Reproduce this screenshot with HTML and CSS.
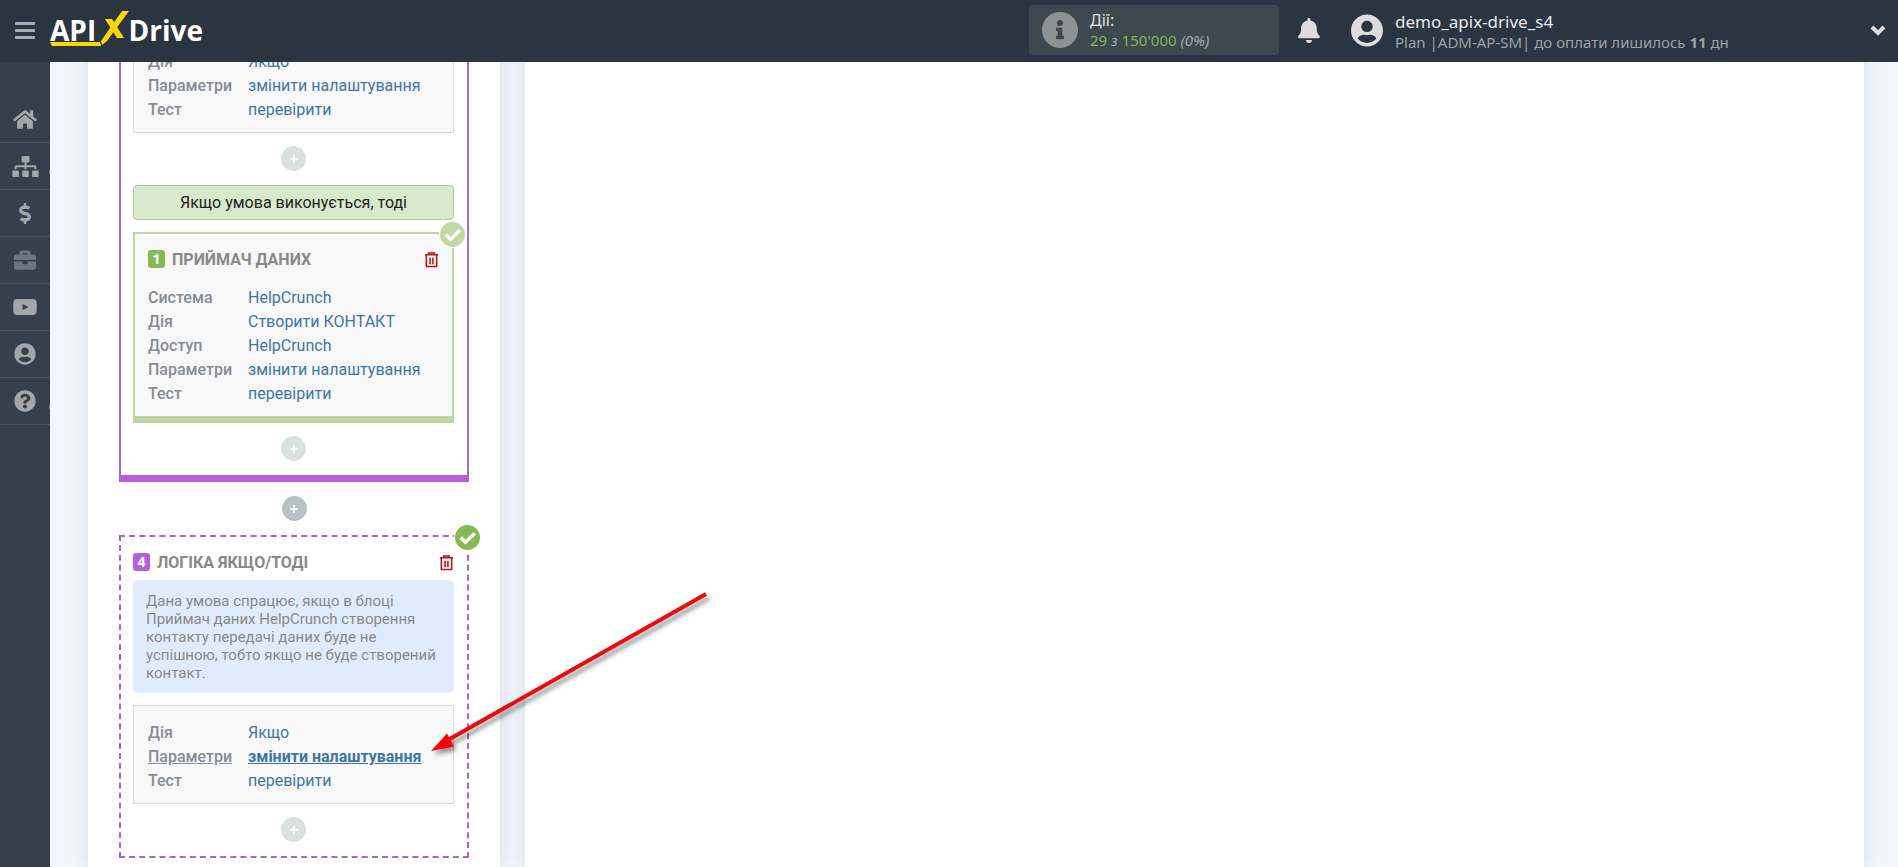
FILE: index.html
```
<!DOCTYPE html>
<html lang="uk">
<head>
    <meta charset="UTF-8">
    <meta name="viewport" content="width=device-width, initial-scale=1.0">
    <title>ApiX-Drive</title>
    <link rel="stylesheet" href="styles.css">
</head>
<body>
    <!-- Shared icons -->
    <svg class="sprite" aria-hidden="true">
        <symbol id="icon-user" viewBox="0 0 496 512">
            <path d="M248 8C111 8 0 119 0 256s111 248 248 248 248-111 248-248S385 8 248 8zm0 96c48.600 0 88 39.400 88 88s-39.400 88-88 88-88-39.400-88-88 39.400-88 88-88zm0 344c-58.700 0-111.300-26.600-146.500-68.200 18.800-35.400 55.600-59.800 98.500-59.800 2.400 0 4.800.4 7.100 1.100 13 4.200 26.600 6.900 40.900 6.900 14.300 0 28-2.700 40.900-6.900 2.300-.7 4.700-1.100 7.100-1.100 42.900 0 79.700 24.400 98.500 59.800C359.300 421.400 306.700 448 248 448z"/>
        </symbol>
        <symbol id="icon-trash" viewBox="0 0 16 17">
            <path d="M1 3.500h14M5 3V1.500h6V3M2.500 4v12h11V4M6.500 6.500v7M9.500 6.500v7" fill="none" stroke="currentColor" stroke-width="1.700"/>
        </symbol>
        <symbol id="icon-check" viewBox="0 0 24 24">
            <path d="M5.500 12l4.500 4.500 9-8.500" fill="none" stroke="#fff" stroke-width="3.400"/>
        </symbol>
        <symbol id="icon-plus" viewBox="0 0 10 10">
            <path d="M1 5h8M5 1v8" stroke="#fff" stroke-width="1.600"/>
        </symbol>
    </svg>

    <header class="header">
        <button class="menu-btn" type="button" aria-label="Меню"><span></span><span></span><span></span></button>
        <a class="logo" href="#">
            <span>API</span>
            <span class="logo-drive">Drive</span>
            <svg class="logo-mark" viewBox="0 0 80 36" aria-hidden="true">
                <path d="M0 31h50l1 4H2z" fill="#fcd80a"/>
                <path d="M52 34l5-4L79 0h-7L51 30z" fill="#fcd80a"/>
                <path d="M55 8h7l12 19h-7z" fill="#fcd80a"/>
            </svg>
        </a>

        <a class="actions" href="#">
            <svg class="actions-icon" viewBox="8 8 496 496" aria-hidden="true"><path d="M256 8C119.043 8 8 119.083 8 256c0 136.997 111.043 248 248 248s248-111.003 248-248C504 119.083 392.957 8 256 8zm0 110c23.196 0 42 18.804 42 42s-18.804 42-42 42-42-18.804-42-42 18.804-42 42-42zm56 254c0 6.627-5.373 12-12 12h-88c-6.627 0-12-5.373-12-12v-24c0-6.627 5.373-12 12-12h12v-64h-12c-6.627 0-12-5.373-12-12v-24c0-6.627 5.373-12 12-12h64c6.627 0 12 5.373 12 12v100h12c6.627 0 12 5.373 12 12v24z"/></svg>
            <span class="actions-text">
                <span class="actions-title">Дії:</span>
                <span class="actions-count"><b>29</b> <i>з</i> <b>150'000</b> <i>(0%)</i></span>
            </span>
        </a>

        <button class="bell-btn" type="button" aria-label="Сповіщення">
            <svg viewBox="0 0 448 512" aria-hidden="true"><path d="M224 512c35.320 0 63.970-28.650 63.970-64H160.030c0 35.350 28.650 64 63.970 64zm215.390-149.710c-19.320-20.760-55.470-51.990-55.470-154.290 0-77.700-54.480-139.900-127.940-155.160V32c0-17.670-14.320-32-31.980-32s-31.980 14.330-31.980 32v20.840C118.560 68.100 64.080 130.300 64.080 208c0 102.300-36.150 133.530-55.470 154.290-6 6.450-8.660 14.160-8.610 21.710.11 16.400 12.980 32 32.100 32h383.800c19.120 0 32-15.600 32.100-32 .05-7.550-2.610-15.270-8.610-21.710z"/></svg>
        </button>

        <button class="user" type="button">
            <svg class="user-icon" aria-hidden="true"><use href="#icon-user"/></svg>
            <span class="user-text">
                <span class="user-name">demo_apix-drive_s4</span>
                <span class="user-plan">Plan |ADM-AP-SM| до оплати лишилось <b>11</b> дн</span>
            </span>
            <svg class="user-arrow" viewBox="0 0 16 11" aria-hidden="true"><path d="M2 2l6 6 6-6" fill="none" stroke="#dcdcdc" stroke-width="4"/></svg>
        </button>
    </header>

    <nav class="sidebar">
        <a href="#" aria-label="Головна"><svg width="24" height="21" viewBox="0 0 576 512"><path d="M280.370 148.260L96 300.110V464a16 16 0 0 0 16 16l112.060-.29a16 16 0 0 0 15.920-16V368a16 16 0 0 1 16-16h64a16 16 0 0 1 16 16v95.640a16 16 0 0 0 16 16.050L464 480a16 16 0 0 0 16-16V300L295.670 148.260a12.190 12.190 0 0 0-15.300 0zM571.600 251.470L488 182.560V44.050a12 12 0 0 0-12-12h-56a12 12 0 0 0-12 12v72.610L318.470 43a48 48 0 0 0-61 0L4.340 251.470a12 12 0 0 0-1.600 16.900l25.500 31A12 12 0 0 0 45.150 301l235.220-193.740a12.190 12.190 0 0 1 15.300 0L530.900 301a12 12 0 0 0 16.900-1.600l25.500-31a12 12 0 0 0-1.700-16.930z"/></svg></a>
        <a class="has-more" href="#" aria-label="Зв'язки"><svg width="27" height="21" viewBox="0 0 640 512"><path d="M128 352H32c-17.670 0-32 14.330-32 32v96c0 17.670 14.330 32 32 32h96c17.670 0 32-14.330 32-32v-96c0-17.670-14.330-32-32-32zm-24-80h192v48h48v-48h192v48h48v-57.590c0-21.170-17.230-38.410-38.410-38.410H344v-64h40c17.670 0 32-14.330 32-32V32c0-17.670-14.330-32-32-32H256c-17.670 0-32 14.330-32 32v96c0 17.670 14.330 32 32 32h40v64H94.410C73.230 224 56 241.230 56 262.410V320h48v-48zm264 80h-96c-17.670 0-32 14.330-32 32v96c0 17.670 14.330 32 32 32h96c17.670 0 32-14.330 32-32v-96c0-17.670-14.330-32-32-32zm240 0h-96c-17.670 0-32 14.330-32 32v96c0 17.670 14.330 32 32 32h96c17.670 0 32-14.330 32-32v-96c0-17.670-14.330-32-32-32z"/></svg></a>
        <a href="#" aria-label="Оплата"><svg width="12" height="21" viewBox="0 0 288 512"><path d="M209.200 233.400l-108-31.600C88.700 198.200 80 186.500 80 173.500c0-16.300 13.200-29.500 29.500-29.500h66.300c12.200 0 24.200 3.700 34.200 10.500 6.100 4.100 14.300 3.100 19.500-2l34.800-34c7.100-6.900 6.100-18.400-1.800-24.500C238 74.800 207.400 64.100 176 64V16c0-8.800-7.200-16-16-16h-32c-8.800 0-16 7.200-16 16v48h-2.500C45.800 64-5.400 118.700.5 183.600c4.200 46.100 39.400 83.600 83.800 96.600l102.500 30c12.500 3.700 21.200 15.300 21.200 28.300 0 16.300-13.200 29.500-29.500 29.500h-66.300C100 368 88 364.300 78 357.500c-6.100-4.100-14.300-3.100-19.500 2l-34.800 34c-7.100 6.900-6.100 18.400 1.800 24.500 24.500 19.200 55.100 29.900 86.500 30v48c0 8.800 7.200 16 16 16h32c8.800 0 16-7.200 16-16v-48.200c46.600-.9 90.300-28.600 105.700-72.700 21.500-61.600-14.600-124.800-72.500-141.700z"/></svg></a>
        <a class="muted" href="#" aria-label="Проєкти"><svg width="22" height="22" viewBox="0 0 512 512"><path d="M320 336c0 8.840-7.160 16-16 16h-96c-8.840 0-16-7.160-16-16v-48H0v144c0 25.600 22.400 48 48 48h416c25.600 0 48-22.400 48-48V288H320v48zm144-208h-80V80c0-25.600-22.400-48-48-48H176c-25.600 0-48 22.400-48 48v48H48c-25.600 0-48 22.400-48 48v80h512v-80c0-25.600-22.400-48-48-48zm-144 0H192V96h128v32z"/></svg></a>
        <a href="#" aria-label="Відео"><svg width="24" height="16" viewBox="0 0 24 16"><path fill-rule="evenodd" d="M4 0Q12-.5 20 0Q23 0 23.500 3Q24 8 23.500 13Q23 16 20 16Q12 16.500 4 16Q1 16 .5 13Q0 8 .5 3Q1 0 4 0zM9.500 5v6l6-3z"/></svg></a>
        <a href="#" aria-label="Профіль"><svg width="22" height="22"><use href="#icon-user"/></svg></a>
        <a class="has-more" href="#" aria-label="Допомога"><svg width="22" height="22" viewBox="0 0 512 512"><path d="M504 256c0 136.997-111.043 248-248 248S8 392.997 8 256C8 119.083 119.043 8 256 8s248 111.083 248 248zM262.655 90c-54.497 0-89.255 22.957-116.549 63.758-3.536 5.286-2.353 12.415 2.715 16.258l34.699 26.310c5.205 3.947 12.621 3.008 16.665-2.122 17.864-22.658 30.113-35.797 57.303-35.797 20.429 0 45.698 13.148 45.698 32.958 0 14.976-12.363 22.667-32.534 33.976C247.128 238.528 216 254.941 216 296v4c0 6.627 5.373 12 12 12h56c6.627 0 12-5.373 12-12v-1.333c0-28.462 83.186-29.647 83.186-106.667 0-58.002-60.165-102-116.531-102zM256 338c-25.365 0-46 20.635-46 46 0 25.364 20.635 46 46 46s46-20.636 46-46c0-25.365-20.635-46-46-46z"/></svg></a>
    </nav>

    <main class="page">
        <section class="panel flow">
            <!-- Logic block -->
            <div class="logic">
                <div class="card">
                    <dl class="rows">
                        <dt>Дія</dt><dd><a href="#">Якщо</a></dd>
                        <dt>Параметри</dt><dd><a href="#">змінити налаштування</a></dd>
                        <dt>Тест</dt><dd><a href="#">перевірити</a></dd>
                    </dl>
                </div>
                <button class="add-btn faded" type="button" aria-label="Додати"><svg><use href="#icon-plus"/></svg></button>
                <div class="condition">Якщо умова виконується, тоді</div>
                <div class="card card-target">
                    <span class="status faded-status"><svg><use href="#icon-check"/></svg></span>
                    <div class="title">
                        <span class="number">1</span>
                        <h3>ПРИЙМАЧ ДАНИХ</h3>
                        <button class="trash-btn" type="button" aria-label="Видалити"><svg><use href="#icon-trash"/></svg></button>
                    </div>
                    <dl class="rows">
                        <dt>Система</dt><dd><a href="#">HelpCrunch</a></dd>
                        <dt>Дія</dt><dd><a href="#">Створити КОНТАКТ</a></dd>
                        <dt>Доступ</dt><dd><a href="#">HelpCrunch</a></dd>
                        <dt>Параметри</dt><dd><a href="#">змінити налаштування</a></dd>
                        <dt>Тест</dt><dd><a href="#">перевірити</a></dd>
                    </dl>
                </div>
                <button class="add-btn faded" type="button" aria-label="Додати"><svg><use href="#icon-plus"/></svg></button>
            </div>

            <button class="add-btn" type="button" aria-label="Додати"><svg><use href="#icon-plus"/></svg></button>

            <!-- Logic block being edited -->
            <div class="logic logic-active">
                <span class="status"><svg><use href="#icon-check"/></svg></span>
                <div class="title">
                    <span class="number number-logic">4</span>
                    <h3>ЛОГІКА ЯКЩО/ТОДІ</h3>
                    <button class="trash-btn" type="button" aria-label="Видалити"><svg><use href="#icon-trash"/></svg></button>
                </div>
                <p class="note">Дана умова спрацює, якщо в блоці Приймач даних HelpCrunch створення контакту передачі даних буде не успішною, тобто якщо не буде створений контакт.</p>
                <div class="card">
                    <dl class="rows">
                        <dt>Дія</dt><dd><a href="#">Якщо</a></dd>
                        <dt class="current">Параметри</dt><dd class="current"><a href="#">змінити налаштування</a></dd>
                        <dt>Тест</dt><dd><a href="#">перевірити</a></dd>
                    </dl>
                </div>
                <button class="add-btn faded" type="button" aria-label="Додати"><svg><use href="#icon-plus"/></svg></button>
            </div>
        </section>

        <section class="panel content"></section>
    </main>

    <!-- Pointer to the settings link -->
    <svg class="pointer" viewBox="0 0 290 170" aria-hidden="true">
        <path d="M22 150L280 4" stroke="#ec0a0a" stroke-width="4" fill="none"/>
        <path d="M5 161L21 143.500L28 156.500z" fill="#fb0007"/>
    </svg>
</body>
</html>
```
FILE: styles.css
```
* {
    box-sizing: border-box;
}

body {
    margin: 0;
    font-family: Roboto, sans-serif;
    font-size: 16px;
    background-color: #f3f6fc;
    color: #868c94;
}

a {
    color: #3d76a9;
    text-decoration: none;
}

button {
    padding: 0;
    border: 0;
    background: none;
    font: inherit;
    color: inherit;
    cursor: pointer;
}

svg {
    display: block;
    fill: currentColor;
}

.sprite {
    position: absolute;
    width: 0;
    height: 0;
}

/* Header */
.header {
    position: fixed;
    z-index: 3;
    top: 0;
    left: 0;
    right: 0;
    height: 62px;
    display: flex;
    align-items: center;
    padding: 0 12px 2px 15px;
    background-color: #2b3541;
    font-family: "Noto Sans", sans-serif;
}

.menu-btn {
    display: grid;
    gap: 4px;
    width: 20px;
    margin-right: 15px;
}

.menu-btn span {
    height: 3px;
    border-radius: 1px;
    background-color: #a9aeb3;
}

.logo {
    position: relative;
    display: flex;
    justify-content: space-between;
    width: 153px;
    color: #fff;
    font-family: "Open Sans", sans-serif;
    font-size: 28px;
    font-weight: 700;
    line-height: 34px;
}

.logo-mark {
    position: absolute;
    left: 0;
    top: -2px;
    width: 80px;
    height: 36px;
}

.actions {
    display: flex;
    align-items: center;
    gap: 12px;
    width: 250px;
    height: 50px;
    margin-left: auto;
    padding-left: 13px;
    border-radius: 4px;
    background-color: #3d484f;
    color: #a5abae;
}

.actions-icon {
    width: 36px;
    height: 36px;
    color: #8d9395;
}

.actions-text {
    display: grid;
    line-height: 20px;
}

.actions-title {
    color: #dfe1e2;
}

.actions-count {
    font-size: 15px;
}

.actions-count b {
    font-weight: 400;
    color: #81b857;
}

.bell-btn {
    width: 22px;
    margin: 0 31px 0 19px;
    color: #dcdcdc;
}

.bell-btn svg {
    height: 25px;
}

.user {
    display: flex;
    align-items: center;
    gap: 12px;
    flex: 0 1 535px;
}

.user-icon {
    width: 32px;
    height: 33px;
    color: #dcdcdc;
}

.user-text {
    display: grid;
    padding-top: 4px;
    text-align: left;
    line-height: 20px;
}

.user-name {
    font-size: 17px;
    color: #e9eaeb;
}

.user-plan {
    font-size: 15px;
    color: #9ba2a8;
}

.user-arrow {
    width: 16px;
    height: 11px;
    margin-left: auto;
}

/* Sidebar */
.sidebar {
    position: fixed;
    z-index: 2;
    top: 0;
    bottom: 0;
    left: 0;
    width: 50px;
    padding-top: 96px;
    background-color: #36404c;
}

.sidebar a {
    display: flex;
    align-items: center;
    justify-content: center;
    height: 47px;
    border-bottom: 1px solid #4a545f;
    color: #a3a7aa;
}

.sidebar .muted {
    color: #6d757e;
}

.sidebar .has-more {
    position: relative;
}

.sidebar .has-more::after {
    content: "";
    position: absolute;
    right: 0;
    bottom: 15px;
    width: 1px;
    height: 4px;
    background-color: #6d757e;
}

/* Page */
.page {
    display: flex;
    gap: 25px;
    min-height: 100vh;
    padding: 0 34px 0 38px;
    margin-left: 50px;
}

.panel {
    background-color: #fff;
    box-shadow: 0 0 20px rgba(0, 0, 0, 0.12);
}

.flow {
    flex: 0 0 412px;
    padding: 0 31px;
}

.content {
    flex: 1;
}

.logic {
    position: relative;
    padding: 34px 13px 0 12px;
    border: 2px solid #a86cbe;
    border-top: 0;
    border-bottom: 7px solid #b85fdd;
}

.logic-active {
    padding-top: 15px;
    border: 2px dashed #b060c8;
}

.card {
    position: relative;
    padding: 15px 14px 10px;
    border: 1px solid #d9dadb;
    background-color: #f8f8f8;
}

.card-target {
    padding: 15px 13px 10px;
    border: 2px solid #bcd79f;
    border-bottom-width: 7px;
}

.card-target .title {
    margin-bottom: 17px;
}

.condition {
    margin-bottom: 12px;
    border: 1px solid #aecb9d;
    border-radius: 4px;
    background-color: #d8eacc;
    color: #222;
    text-align: center;
    line-height: 33px;
}

.add-btn {
    display: flex;
    align-items: center;
    justify-content: center;
    width: 25px;
    height: 25px;
    margin: 14px auto;
    border-radius: 50%;
    background-color: #b4c3c4;
}

.add-btn.faded {
    margin: 13px auto 14px;
    background-color: #dae1e1;
}

.add-btn svg {
    width: 10px;
    height: 10px;
}

.title {
    display: flex;
    align-items: center;
    gap: 7px;
    height: 20px;
    margin-bottom: 8px;
}

.title h3 {
    margin: 0;
    font-size: 16px;
    font-weight: 700;
    color: #888;
}

.number {
    width: 17px;
    height: 18px;
    border-radius: 3px;
    background-color: #86b853;
    color: #fff;
    font-family: "Noto Sans", sans-serif;
    font-size: 14px;
    font-weight: 700;
    line-height: 18px;
    text-align: center;
}

.number-logic {
    background-color: #b85fdd;
}

.trash-btn {
    margin-left: auto;
    color: #b3191c;
}

.trash-btn svg {
    width: 15px;
    height: 17px;
}

.status {
    position: absolute;
    top: -12px;
    right: -13px;
    width: 25px;
    height: 25px;
    border-radius: 50%;
    background-color: #86b853;
    box-shadow: 0 0 0 1px #fff;
}

.status svg {
    width: 25px;
    height: 25px;
}

.faded-status {
    background-color: #bfdaa3;
}

.rows {
    display: grid;
    grid-template-columns: 100px 1fr;
    margin: 0;
    line-height: 24px;
}

.rows dt {
    font-weight: 500;
}

.rows dd {
    margin: 0;
}

.rows .current,
.rows .current a {
    text-decoration: underline;
}

.rows .current a {
    font-weight: 700;
}

.note {
    margin: 0 0 12px;
    padding: 12px 13px 11px;
    border-radius: 5px;
    background-color: #e0ecfd;
    font-size: 15px;
    line-height: 18px;
    color: #888;
}

.pointer {
    position: absolute;
    z-index: 1;
    top: 590px;
    left: 426px;
    width: 290px;
    height: 170px;
    filter: drop-shadow(3px 4px 2px rgba(0, 0, 0, 0.4));
    pointer-events: none;
}
```
